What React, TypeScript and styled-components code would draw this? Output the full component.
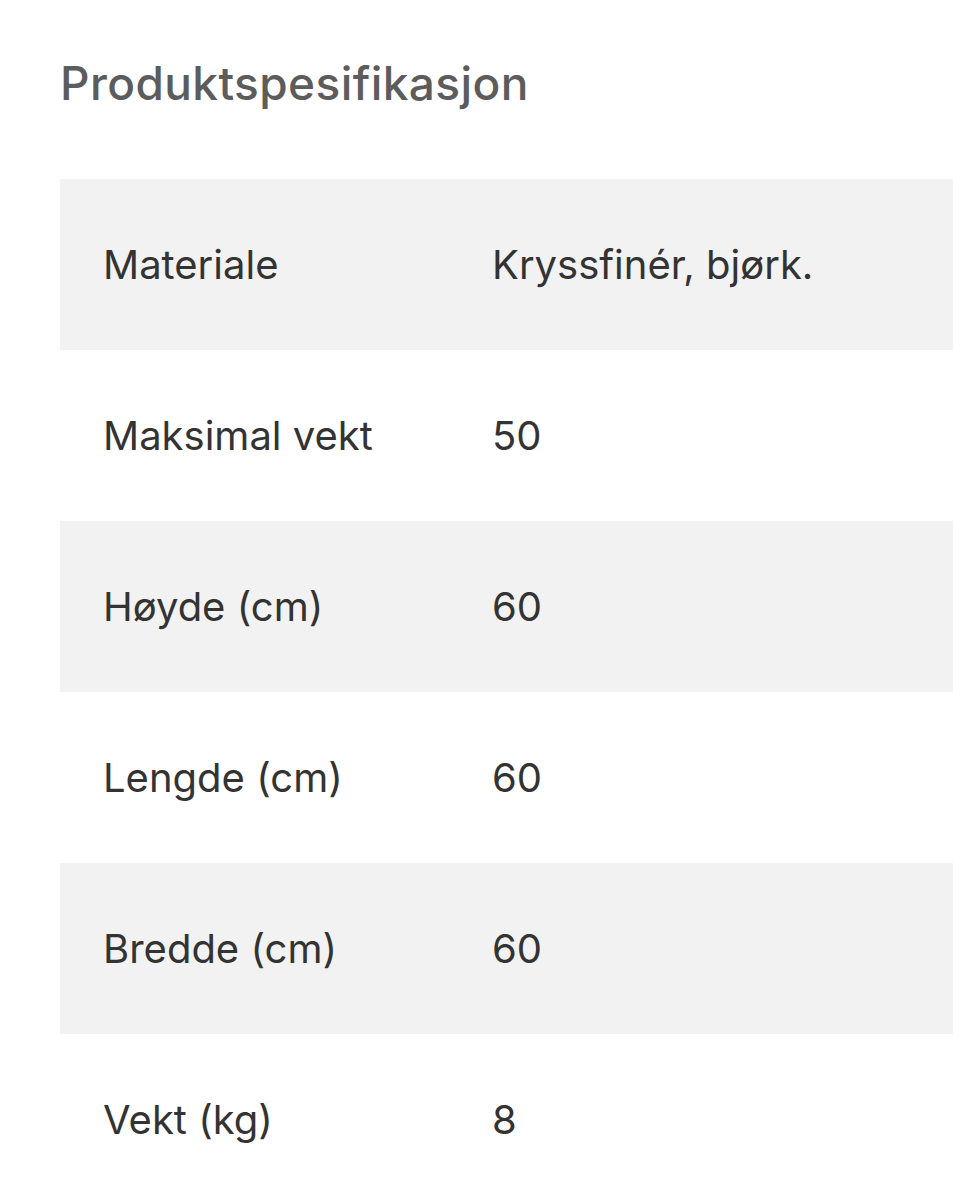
import React from "react";
import styled, { createGlobalStyle } from "styled-components";

interface Spec {
  label: string;
  value: string;
}

const specs: Spec[] = [
  { label: "Materiale", value: "Kryssfinér, bjørk." },
  { label: "Maksimal vekt", value: "50" },
  { label: "Høyde (cm)", value: "60" },
  { label: "Lengde (cm)", value: "60" },
  { label: "Bredde (cm)", value: "60" },
  { label: "Vekt (kg)", value: "8" },
];

const GlobalStyle = createGlobalStyle`
  html, body {
    margin: 0;
    padding: 0;
    background: #fff;
    overflow: hidden;
  }
  body {
    font-family: Inter, "Noto Sans", sans-serif;
  }
`;

const Page = styled.div`
  padding: 53px 0 0 60px;
`;

const Title = styled.h2`
  margin: 0 0 66px 0;
  font-size: 46px;
  line-height: 60px;
  font-weight: 500;
  letter-spacing: 0.4px;
  color: #5c5c5c;
`;

const Table = styled.table`
  width: 100%;
  border-collapse: collapse;
  table-layout: fixed;
`;

const Tr = styled.tr<{ shaded: boolean }>`
  height: 171px;
  background: ${(p) => (p.shaded ? "#f2f2f2" : "#fff")};
`;

const Td = styled.td<{ label?: boolean }>`
  padding: 0 0 0 ${(p) => (p.label ? "43px" : "0")};
  width: ${(p) => (p.label ? "432px" : "auto")};
  box-sizing: border-box;
  font-size: 40px;
  color: #333;
  vertical-align: middle;
  white-space: nowrap;
`;

const App: React.FC = () => (
  <Page>
    <GlobalStyle />
    <Title>Produktspesifikasjon</Title>
    <Table>
      <tbody>
        {specs.map((s, i) => (
          <Tr key={s.label} shaded={i % 2 === 0}>
            <Td label>{s.label}</Td>
            <Td>{s.value}</Td>
          </Tr>
        ))}
      </tbody>
    </Table>
  </Page>
);

export default App;
